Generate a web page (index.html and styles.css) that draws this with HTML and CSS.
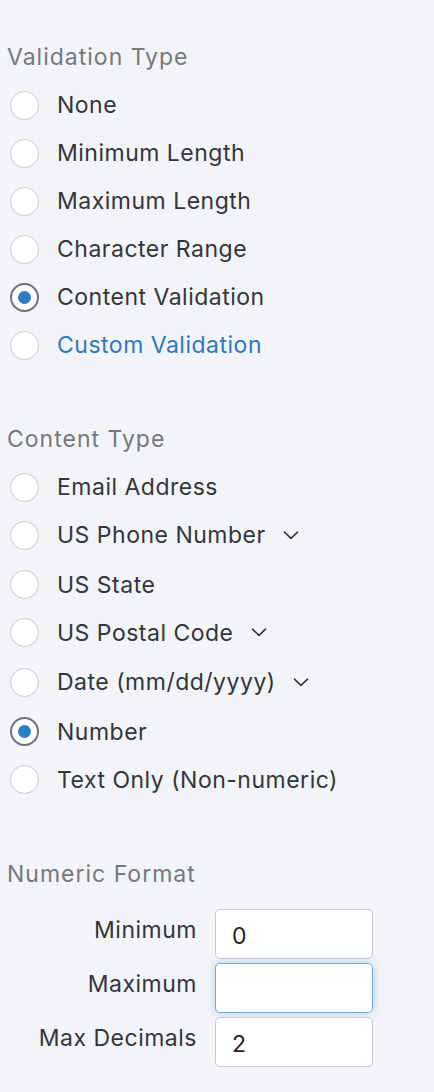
FILE: index.html
```html
<!DOCTYPE html>
<html>
<head>
<meta charset="utf-8">
<link rel="stylesheet" href="styles.css">
</head>
<body>
<div class="panel">
  <section class="group">
    <h2 class="group-title">Validation Type</h2>
    <ul class="radio-list">
      <li class="radio-row"><span class="radio"></span><span class="radio-label">None</span></li>
      <li class="radio-row"><span class="radio"></span><span class="radio-label">Minimum Length</span></li>
      <li class="radio-row"><span class="radio"></span><span class="radio-label">Maximum Length</span></li>
      <li class="radio-row"><span class="radio"></span><span class="radio-label">Character Range</span></li>
      <li class="radio-row"><span class="radio is-checked"></span><span class="radio-label">Content Validation</span></li>
      <li class="radio-row"><span class="radio"></span><span class="radio-label is-link">Custom Validation</span></li>
    </ul>
  </section>

  <section class="group">
    <h2 class="group-title">Content Type</h2>
    <ul class="radio-list">
      <li class="radio-row"><span class="radio"></span><span class="radio-label">Email Address</span></li>
      <li class="radio-row has-menu"><span class="radio"></span><span class="radio-label">US Phone Number</span>
        <svg class="chevron" width="16" height="9" viewBox="0 0 16 9"><path d="M1.5 1.2 L8 7.4 L14.5 1.2" fill="none" stroke="#32363a" stroke-width="1.6" stroke-linecap="round" stroke-linejoin="round"/></svg></li>
      <li class="radio-row"><span class="radio"></span><span class="radio-label">US State</span></li>
      <li class="radio-row has-menu"><span class="radio"></span><span class="radio-label">US Postal Code</span>
        <svg class="chevron" width="16" height="9" viewBox="0 0 16 9"><path d="M1.5 1.2 L8 7.4 L14.5 1.2" fill="none" stroke="#32363a" stroke-width="1.6" stroke-linecap="round" stroke-linejoin="round"/></svg></li>
      <li class="radio-row has-menu"><span class="radio"></span><span class="radio-label">Date (mm/dd/yyyy)</span>
        <svg class="chevron" width="16" height="9" viewBox="0 0 16 9"><path d="M1.5 1.2 L8 7.4 L14.5 1.2" fill="none" stroke="#32363a" stroke-width="1.6" stroke-linecap="round" stroke-linejoin="round"/></svg></li>
      <li class="radio-row"><span class="radio is-checked"></span><span class="radio-label">Number</span></li>
      <li class="radio-row"><span class="radio"></span><span class="radio-label">Text Only (Non-numeric)</span></li>
    </ul>
  </section>

  <section class="group group-numeric">
    <h2 class="group-title">Numeric Format</h2>
    <div class="field-grid">
      <label class="field-label">Minimum</label>
      <input class="field-input" type="text" value="0">
      <label class="field-label">Maximum</label>
      <input class="field-input is-focused" type="text" value="">
      <label class="field-label">Max Decimals</label>
      <input class="field-input" type="text" value="2">
    </div>
  </section>
</div>
</body>
</html>
```

FILE: styles.css
```css
* {
  box-sizing: border-box;
}

html, body {
  margin: 0;
  padding: 0;
  background: #f3f4f8;
}

body {
  font-family: Inter, "Noto Sans", sans-serif;
  font-size: 23px;
  letter-spacing: 0.5px;
  color: #32363a;
}

.panel {
  padding-top: 33px;
}

.group {
  margin-bottom: 46px;
}

.group-numeric {
  margin-top: 3px;
}

.group-title {
  margin: 0;
  padding-left: 7px;
  height: 48px;
  line-height: 48px;
  font-size: 23px;
  letter-spacing: 1px;
  font-weight: 400;
  color: #76787b;
}

.radio-list {
  list-style: none;
  margin: 0;
  padding: 0;
}

.radio-row {
  display: flex;
  align-items: center;
  height: 48px;
}

.radio-row.has-menu {
  margin-bottom: 1.5px;
}

.radio {
  flex: none;
  width: 29px;
  height: 29px;
  margin-left: 10px;
  margin-right: 18px;
  border-radius: 50%;
  border: 1.5px solid #cacaca;
  background: #fff;
  display: flex;
  align-items: center;
  justify-content: center;
}

.radio.is-checked {
  border: 2px solid #707274;
}

.radio.is-checked::after {
  content: "";
  width: 13px;
  height: 13px;
  border-radius: 50%;
  background: #2e7bc6;
}

.radio-label {
  white-space: nowrap;
}

.radio-label.is-link {
  color: #2b78c4;
}

.chevron {
  margin-left: 17px;
  flex: none;
}

.field-grid {
  display: grid;
  grid-template-columns: 197px 158px;
  column-gap: 18px;
  row-gap: 4px;
  margin-top: 11px;
}

.field-label {
  justify-self: end;
  align-self: center;
  padding-bottom: 8px;
  color: #32363a;
}

.field-input {
  height: 50px;
  width: 158px;
  border: 1.5px solid #c8c8c8;
  border-radius: 5px;
  background: #fff;
  padding: 4px 16px 0;
  font-family: Inter, "Noto Sans", sans-serif;
  font-size: 23px;
  letter-spacing: 0.5px;
  color: #222;
  outline: none;
}

.field-input.is-focused {
  border-color: #6fa8e6;
  box-shadow: 0 0 10px rgba(90, 150, 225, 0.4);
}
```
